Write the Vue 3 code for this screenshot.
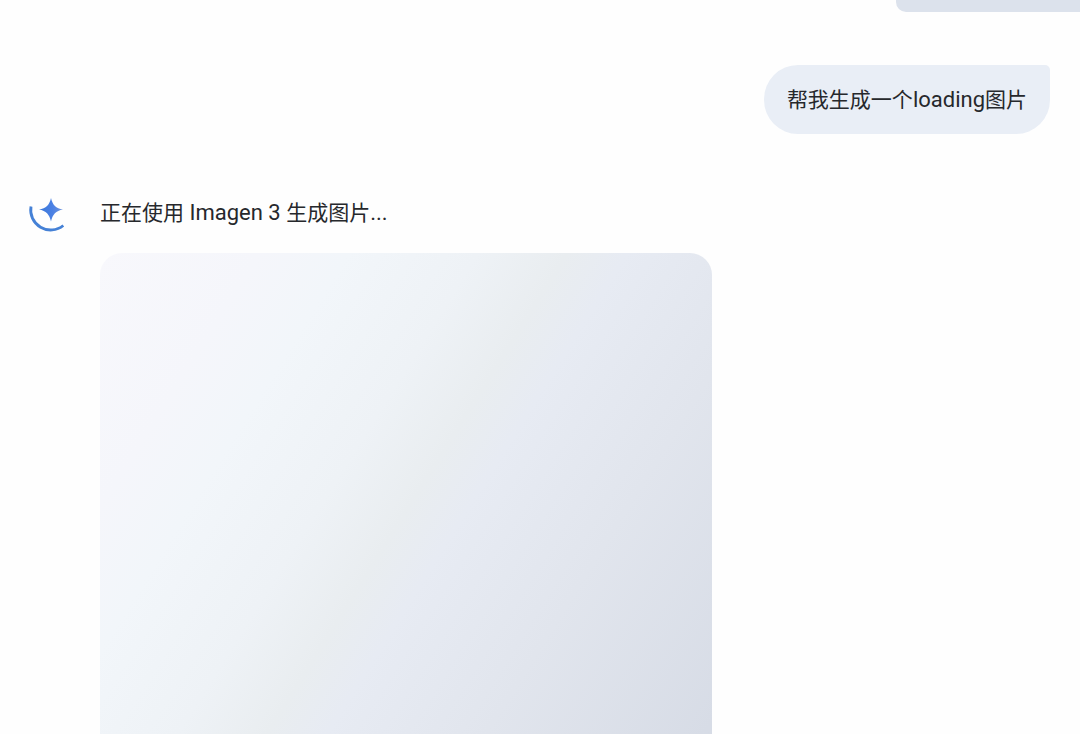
<script setup>
const prompt = [
  { text: '帮我生成一个' },
  { text: 'loading', latin: true },
  { text: '图片' },
]
const status = [
  { text: '正在使用' },
  { text: ' Imagen 3 ', latin: true },
  { text: '生成图片' },
  { text: '...', latin: true },
]
</script>

<template>
  <main class="chat">
    <div class="previous" aria-hidden="true"></div>
    <section class="user-turn">
      <p class="bubble"><span v-for="(part, i) in prompt" :key="i" :class="{ latin: part.latin }">{{ part.text }}</span></p>
    </section>
    <section class="reply">
      <svg class="spinner" viewBox="0 0 40 40" aria-hidden="true">
        <defs>
          <linearGradient id="spark" x1="0" y1="0" x2="1" y2="0">
            <stop offset="0" stop-color="#3a78d8" />
            <stop offset="0.55" stop-color="#4a80e4" />
            <stop offset="1" stop-color="#6f94dc" />
          </linearGradient>
        </defs>
        <path d="M3 10.5A20 20 0 0 0 35.3 29.5" fill="none" stroke="#4581d6" stroke-width="2.8" />
        <path d="M23 2C24.6 9 27.9 12.4 35 13.6C27.9 15 24.6 18.4 23 25.5C21.4 18.4 18.1 15 11 13.6C18.1 12.4 21.4 9 23 2Z" fill="url(#spark)" />
      </svg>
      <div class="content">
        <p class="status" role="status"><span v-for="(part, i) in status" :key="i" :class="{ latin: part.latin }">{{ part.text }}</span></p>
        <div class="placeholder"></div>
      </div>
    </section>
  </main>
</template>

<style>
body {
  margin: 0;
  background: #fefefe;
}
</style>

<style scoped>
.chat {
  height: 100vh;
  overflow: hidden;
  color: #26282c;
  font-family: Roboto, "Noto Sans CJK SC", sans-serif;
  font-size: 21px;
  line-height: 32px;
}

p {
  margin: 0;
  white-space: pre-wrap;
}

.latin {
  font-size: 22px;
}

.previous {
  width: 17%;
  height: 12px;
  margin-left: auto;
  border-radius: 0 0 0 10px;
  background: #dce2ec;
}

.user-turn {
  display: flex;
  justify-content: flex-end;
  padding: 53px 30px 0;
}

.bubble {
  padding: 19px 23px 18px;
  border-radius: 34px 5px 34px 34px;
  background: #e9eef6;
}

.reply {
  display: flex;
  align-items: flex-start;
  gap: 32px;
  padding: 62px 28px 0;
}

.spinner {
  flex: none;
  width: 40px;
  height: 40px;
}

.content {
  flex: 1;
  padding-top: 1px;
}

.placeholder {
  max-width: 612px;
  margin-top: 24px;
  aspect-ratio: 1;
  border-radius: 22px;
  background: linear-gradient(122deg, #f8f8fc 0%, #f5f6fb 16%, #f2f6fa 25%, #eef2f6 38%, #e9edf0 47%, #e7ebf3 53%, #e1e5ed 69%, #d7dce6 91%, #d4d9e4 100%);
}
</style>
